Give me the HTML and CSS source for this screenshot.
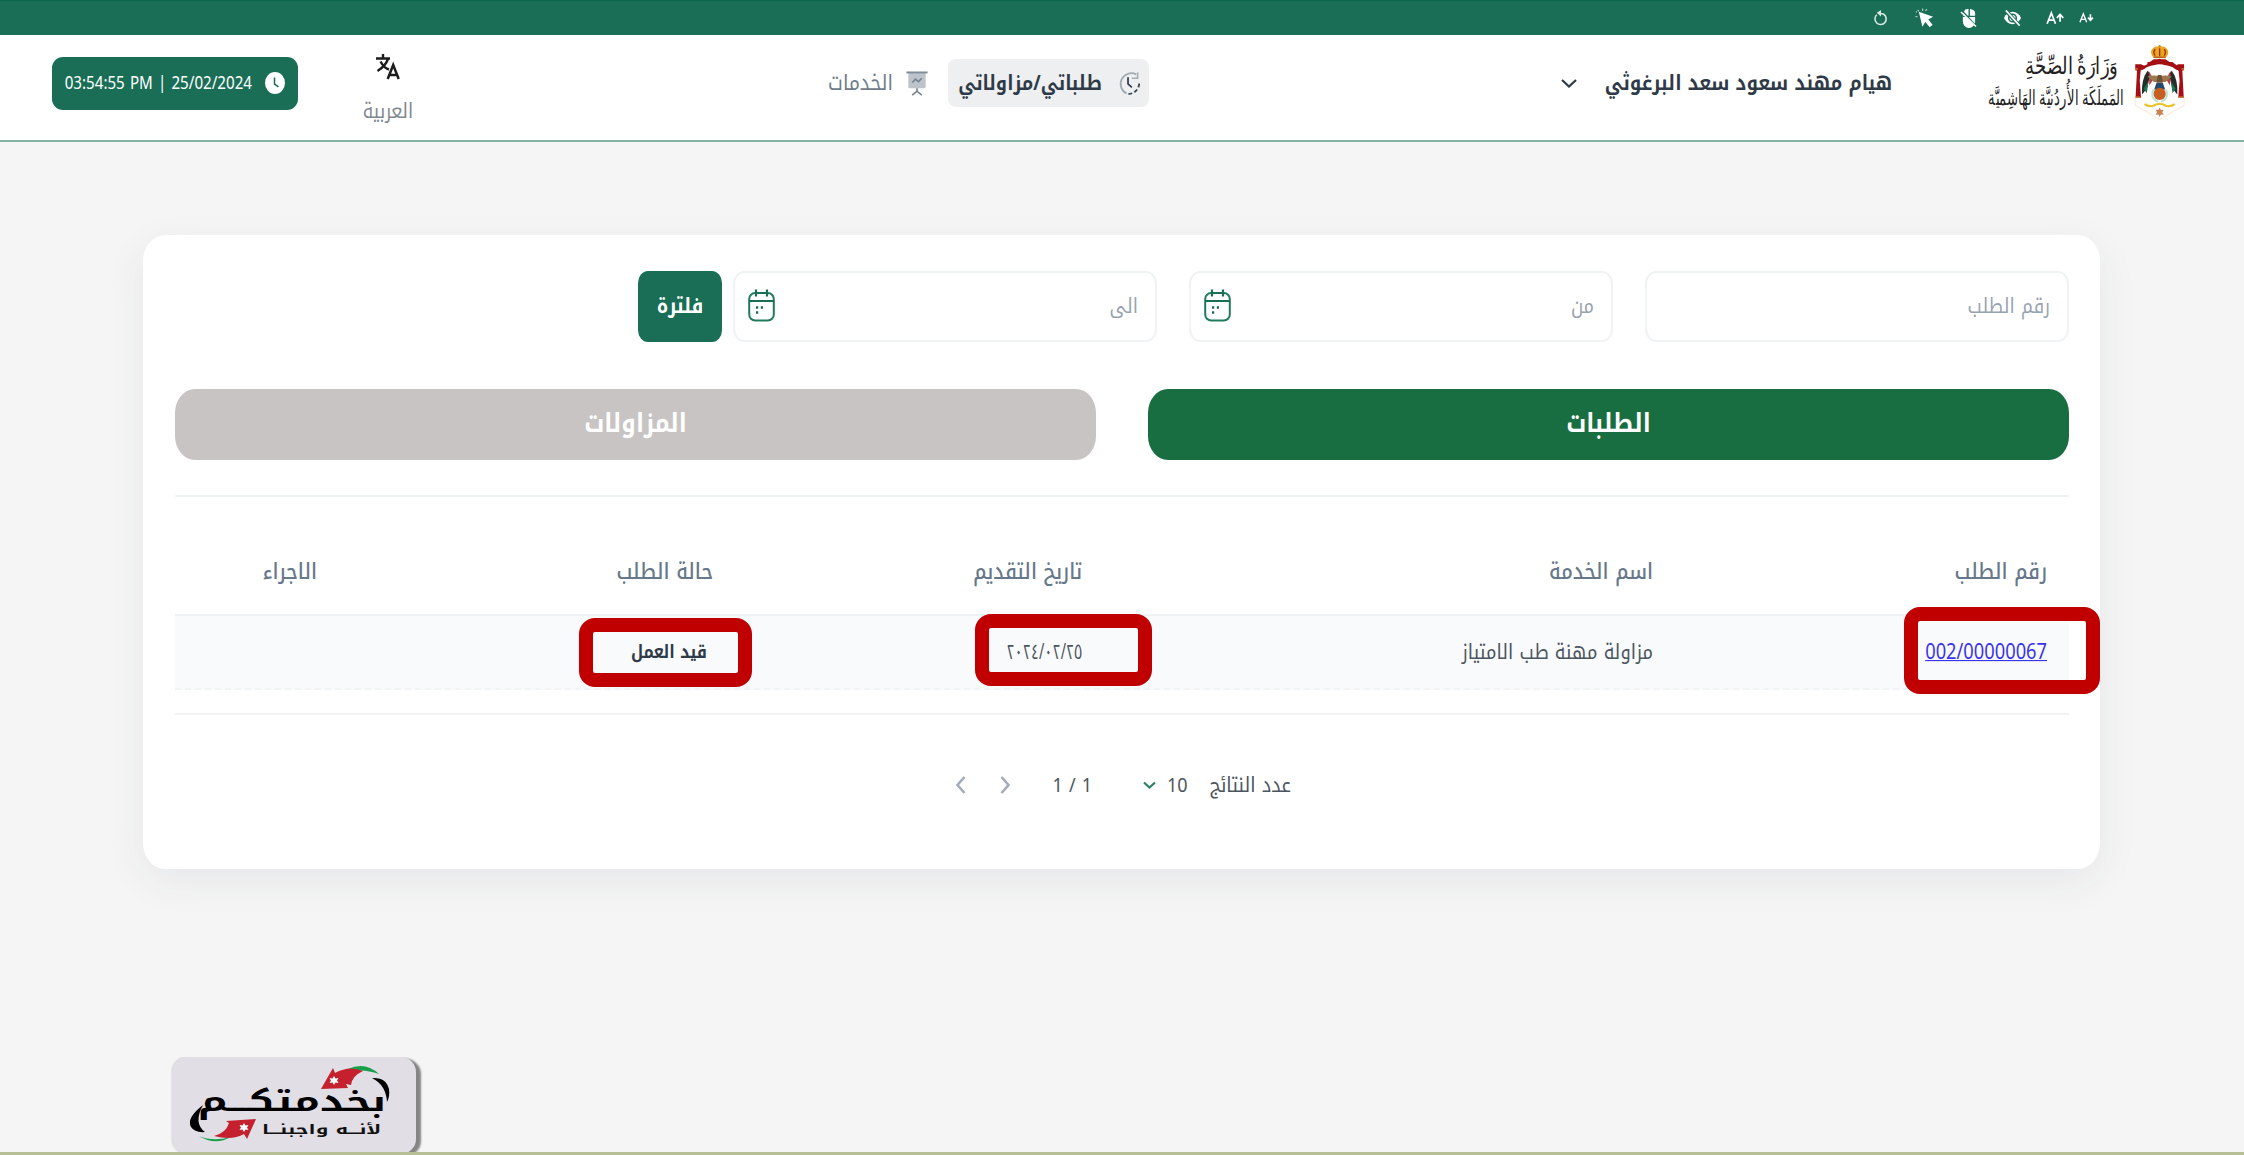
FILE: index.html
```html
<!DOCTYPE html>
<html lang="ar" dir="rtl">
<head>
<meta charset="utf-8">
<title>طلباتي/مزاولاتي</title>
<link rel="stylesheet" href="styles.css">
</head>
<body>
<div class="topbar">
  <svg class="tool font-down" viewBox="0 0 16 18"><path d="M1 13.5 4.6 4.500 8.200 13.500M2.400 10.500h4.400" fill="none" stroke="#fff" stroke-width="1.500"/><path d="M12.200 5v6M9.600 8.600l2.600 2.800 2.600-2.800" fill="none" stroke="#fff" stroke-width="1.700"/></svg>
  <svg class="tool font-up" viewBox="0 0 20 18"><path d="M1.200 15 5.600 3.600 10 15M2.800 11.200h5.600" fill="none" stroke="#fff" stroke-width="1.800"/><path d="M14.800 13V5.500M11.400 9l3.400-3.800L18.200 9" fill="none" stroke="#fff" stroke-width="1.800"/></svg>
  <svg class="tool eye" viewBox="0 0 20 18"><path d="M1 9c2-4 5-6.500 9-6.500s7 2.500 9 6.500c-2 4-5 6.500-9 6.500S3 13 1 9z" fill="#fff"/><circle cx="10" cy="9" r="4" fill="none" stroke="#1a6e56" stroke-width="1.600"/><path d="M2 0l15 17" stroke="#1a6e56" stroke-width="4"/><path d="M3 1l14.500 16" stroke="#fff" stroke-width="1.700"/></svg>
  <svg class="tool mouse" viewBox="0 0 18 22"><path d="M5.500 1.500Q8 .5 9 1v7H3.500V5zM10.500 1Q15.500 1.500 16 5v3h-5.500zM3 9.500h13V14a6.500 7 0 0 1-13 0z" fill="#fff"/><path d="M1.500 2l15.500 17" stroke="#1a6e56" stroke-width="1.500"/><path d="M1 4l16 15.500" stroke="#fff" stroke-width="1.500"/></svg>
  <svg class="tool cursor" viewBox="0 0 20 22"><path d="M4 4l15 5.200-5 2.800 4.500 5.500-3 2.800-4.700-5.500-3 5z" fill="#fff"/><path d="M.5 9h2M2 4.500 1 3.500M8 3V.5M3 2l1 1.500M11 3l1.500-2" stroke="#a9cabd" stroke-width="1.300"/></svg>
  <svg class="tool reset" viewBox="0 0 16 18"><path d="M4 5.500A6 6 0 1 0 11.500 5Q9.500 4 7 4.200" fill="none" stroke="#d7e7e1" stroke-width="1.700"/><path d="M4 3.500 8.500.5v6.800z" fill="#d7e7e1"/></svg>
</div>

<header class="header">
  <div class="brand">
    <svg class="emblem" viewBox="65 20 165 244">
      <path d="M72 184v28q36 18 76 44 40-26 76-44v-28" fill="none" stroke="#f9e3d2" stroke-width="3"/>
      <path d="M110 82h20l18-10 18 10h20l24 18" fill="none" stroke="#a31418" stroke-width="10"/>
      <path d="M72 84h18q12 10 28-8l12-8h36l12 8q16 18 28 8h18v18q-22 4-34-8-24-10-42-10t-42 10q-12 12-34 8z" fill="#a50f14"/>
      <path d="M78 94h12l-4 40 4 54H73zM218 94h-12l4 40-4 54h17z" fill="#a50f14"/>
      <path d="M72 98h8M216 98h8M74 186h14M208 186h14" stroke="#d48a26" stroke-width="4"/>
      <path d="M128 62q-14-18 0-29 12-9 20 0 8-9 20 0 14 11 0 29z" fill="#e8a51d"/>
      <path d="M134 57q-8-12 0-20M148 59V34M162 57q8-12 0-20" fill="none" stroke="#9e2a18" stroke-width="4"/>
      <path d="M148 24v9M143 28h10" stroke="#d49119" stroke-width="4"/>
      <path d="M129 62h38" stroke="#bd651b" stroke-width="5"/>
      <path d="M110 104q-20 28-17 74l16-20 10-44z" fill="#252d2a"/><path d="M114 104l14 26-12 20z" fill="#c13840"/><path d="M98 160l10 14 5-38z" fill="#1c7751"/>
      <path d="M186 104q20 28 17 74l-16-20-10-44z" fill="#252d2a"/><path d="M182 104l-14 26 12 20z" fill="#c13840"/><path d="M198 160l-10 14-5-38z" fill="#1c7751"/>
      <path d="M110 122q20-6 38 0 18-6 38 0l-20 17h-36z" fill="#9a794f"/>
      <path d="M142 117h12l4 24h-20z" fill="#6f5235"/>
      <path d="M138 142h20l7 20h-34z" fill="#24486c"/>
      <path d="M128 162q-10 30 16 38M168 162q10 30-16 38" fill="none" stroke="#bfe0d6" stroke-width="6"/>
      <circle cx="148" cy="176" r="19" fill="#c65f22"/>
      <path d="M101 208q14 10 29 4 18-10 36 0 15 6 29-4" fill="none" stroke="#e7c32d" stroke-width="7"/>
      <path d="M148 218l4 8 9-1-5 8 5 8-9-1-4 8-4-8-9 1 5-8-5-8 9 1z" fill="#c98252"/>
    </svg>
    <svg class="brand-name" viewBox="0 0 138 70" direction="rtl">
      <text class="script" transform="translate(131 26) scale(1 1.400)" textLength="93" lengthAdjust="spacingAndGlyphs">وَزَارَةُ الصِّحَّةِ</text>
      <text class="script small" transform="translate(137 57) scale(1 1.650)" textLength="136" lengthAdjust="spacingAndGlyphs">المَملَكَة الأُردُنيَّة الهَاشِميَّة</text>
    </svg>
  </div>
  <div class="user">
    <span class="t name">هيام مهند سعود سعد البرغوثي</span>
    <svg class="chev" viewBox="0 0 16 9"><path d="M1 1l7 6.500L15 1" fill="none" stroke="#2e3a47" stroke-width="2.200"/></svg>
  </div>
  <nav class="nav">
    <a class="nav-item active">
      <svg class="nav-clock" viewBox="0 0 24 26"><path d="M20 4A11 11 0 1 0 10 24" fill="none" stroke="#a5abb2" stroke-width="1.900"/><path d="M21.500 2v6h-6" fill="none" stroke="#a5abb2" stroke-width="1.700"/><path d="M12 24.500A11.500 11.500 0 0 0 23 11" fill="none" stroke="#3b4653" stroke-width="1.900" stroke-dasharray="4 2.500"/><path d="M11.500 7v7l4 3.500" fill="none" stroke="#2e3a47" stroke-width="1.800"/></svg>
      <span class="t">طلباتي/مزاولاتي</span>
    </a>
    <a class="nav-item">
      <svg class="nav-board" viewBox="0 0 22 26"><path d="M2 2h18v14q0 2-2 2H4q-2 0-2-2z" fill="#bcc3cb"/><path d="M0 1.500h22" stroke="#7f8b98" stroke-width="2"/><path d="M6 12l3.500-3.500 3 2.500L16 7.500M11 18v3M6 25l5-4 5 4" fill="none" stroke="#75818e" stroke-width="1.700"/></svg>
      <span class="t">الخدمات</span>
    </a>
  </nav>
  <div class="lang">
    <svg viewBox="0 0 24 27"><path d="M0 5.500h14M7 1v4.500M12 6Q9.500 13 1.500 18M4.500 8.500Q8 15 13 16.500" fill="none" stroke="#1c1c1c" stroke-width="2.400"/><path d="M11.700 26l5.500-14 5.500 14M13.500 22h7.500" fill="none" stroke="#1c1c1c" stroke-width="2.500"/></svg>
    <span class="t">العربية</span>
  </div>
  <div class="clock">
    <svg viewBox="0 0 20 22"><ellipse cx="10" cy="11" rx="10" ry="11" fill="#fff"/><path d="M9.500 5.500v6.500l4 2.800" fill="none" stroke="#1a6e56" stroke-width="1.500"/></svg>
    <span class="t" dir="ltr">03:54:55 PM | 25/02/2024</span>
  </div>
</header>

<main class="card">
  <form class="filters">
    <div class="field"><span class="t">رقم الطلب</span></div>
    <div class="field"><span class="t">من</span>
      <svg class="cal" viewBox="0 0 27 33"><rect x="1.200" y="4" width="24.600" height="27.500" rx="6" fill="none" stroke="#1f7a5e" stroke-width="2"/><path d="M1 12h25M7.500 4h12M8 .5v7M19 .5v7" stroke="#1a6e56" stroke-width="2.200"/><path d="M8 18.500h2.200M12.800 18.500H15M8 23.500h2.200" stroke="#1a6e56" stroke-width="2.600"/></svg>
    </div>
    <div class="field"><span class="t">الى</span>
      <svg class="cal" viewBox="0 0 27 33"><rect x="1.200" y="4" width="24.600" height="27.500" rx="6" fill="none" stroke="#1f7a5e" stroke-width="2"/><path d="M1 12h25M7.500 4h12M8 .5v7M19 .5v7" stroke="#1a6e56" stroke-width="2.200"/><path d="M8 18.500h2.200M12.800 18.500H15M8 23.500h2.200" stroke="#1a6e56" stroke-width="2.600"/></svg>
    </div>
    <div class="filter-btn"><span class="t">فلترة</span></div>
  </form>

  <div class="tabs">
    <div class="tab on"><span class="t">الطلبات</span></div>
    <div class="tab"><span class="t">المزاولات</span></div>
  </div>

  <section class="table">
    <div class="row head">
      <div><span class="t">رقم الطلب</span></div>
      <div><span class="t">اسم الخدمة</span></div>
      <div><span class="t">تاريخ التقديم</span></div>
      <div><span class="t">حالة الطلب</span></div>
      <div><span class="t">الاجراء</span></div>
    </div>
    <div class="row body">
      <div><a class="t link" href="#">002/00000067</a><i class="mark mark-number"></i></div>
      <div><span class="t">مزاولة مهنة طب الامتياز</span></div>
      <div><span class="t date">٢٠٢٤/٠٢/٢٥</span><i class="mark mark-date"></i></div>
      <div><span class="t status">قيد العمل</span><i class="mark mark-status"></i></div>
      <div></div>
    </div>
  </section>

  <div class="pager">
    <span class="t label">عدد النتائج</span>
    <span class="t count">10</span>
    <svg class="pick" viewBox="0 0 13 9"><path d="M1 1.500l5.500 5L12 1.500" fill="none" stroke="#2d8264" stroke-width="2.200"/></svg>
    <span class="t pages">1 / 1</span>
    <svg class="arrow next" viewBox="0 0 10 18"><path d="M1.500 1l7 8-7 8" fill="none" stroke="#a3adb8" stroke-width="2.600"/></svg>
    <svg class="arrow" viewBox="0 0 10 18"><path d="M8.500 1l-7 8 7 8" fill="none" stroke="#a3adb8" stroke-width="2.600"/></svg>
  </div>
</main>

<footer class="footer">
  <div class="badge">
    <svg viewBox="0 0 244 97" direction="rtl">
      <path d="M176 12q17-8 31 5-14-5-25-3z" fill="#16a04c"/>
      <path d="M149 32l12-21 2 5q14-8 28-2-11 5-12 14l-5-1 2 4z" fill="#c4202e"/>
      <path d="M162 19l1.500 2.500 3-.5-1.500 2.500 1.500 2.500-3-.5-1.500 2.500-1.500-2.500-3 .5 1.500-2.500-1.500-2.500 3 .5z" fill="#fff"/>
      <path d="M200 21q14-1 17 11 1 8-2 13-1-17-15-24z" fill="#000"/>
      <path d="M31 48q-17 13-12 22 4 6 14 5-12-9-2-27z" fill="#000"/>
      <path d="M27 79q14 6 32 1-16 9-32-1z" fill="#16a04c"/>
      <path d="M84 62l-9 20-3-5q-12 7-30 2 12-3 15-13l-3-2z" fill="#c4202e"/>
      <path d="M72 66l1.500 2.500 3-.5-1.500 2.500 1.500 2.500-3-.5-1.500 2.500-1.500-2.500-3 .5 1.500-2.500-1.500-2.500 3 .5z" fill="#fff"/>
      <text class="badge-big" x="214" y="54" textLength="188" lengthAdjust="spacingAndGlyphs">بخدمتكـــم</text>
      <text class="badge-small" x="209" y="77" textLength="119" lengthAdjust="spacingAndGlyphs">لأنـــه واجبنـــا</text>
    </svg>
  </div>
</footer>
</body>
</html>
```
FILE: styles.css
```css
* { box-sizing: border-box; }
body {
  margin: 0;
  height: 1155px;
  overflow: hidden;
  display: flex;
  flex-direction: column;
  background: #f5f5f5;
  color: #2e3a47;
  font-family: "Noto Kufi Arabic", "Noto Sans", "DejaVu Sans", sans-serif;
  font-size: 18.300px;
  font-feature-settings: "rlig" 0, "liga" 0;
}
svg { display: block; flex: none; }

/* tall, narrow lettering */
.t {
  display: inline-block;
  white-space: nowrap;
  line-height: 30px;
  transform: scaleY(1.140);
}

.topbar {
  height: 35px;
  flex: none;
  background: #1a6e56;
  border-top: 1px solid #0b654b;
  display: flex;
  align-items: center;
  padding-right: 150px;
}
.tool { height: 18px; }
.font-down { width: 15px; }
.font-up { width: 19px; margin-right: 14px; }
.eye { width: 19px; margin-right: 24px; }
.mouse { width: 17px; height: 21px; margin-right: 26px; }
.cursor { width: 19px; height: 21px; margin-right: 26px; }
.reset { width: 15px; margin-right: 27px; }

.header {
  height: 107px;
  flex: none;
  background: #fff;
  border-bottom: 2px solid #84b3a3;
  display: flex;
  align-items: center;
  padding: 0 58px 9px 52px;
}
.brand { display: flex; align-items: center; gap: 8px; width: 196px; }
.emblem { width: 53px; height: 80px; }
.brand-name { width: 138px; height: 70px; }
.script { font: 17px serif; fill: #222; }
.script.small { font-size: 13px; }
.user { display: flex; align-items: center; width: 331px; margin-right: 98px; font-weight: 700; justify-content: space-between; }
.name { font-size: 18.360px; }
.user .t, .nav .t { margin-top: -1px; }
.chev { width: 16px; height: 9px; }
.nav { display: flex; align-items: center; margin-right: 412px; gap: 20px; width: 330px; }
.nav-item { display: flex; align-items: center; gap: 13px; height: 48px; color: #707c89; font-size: 19px; }
.nav-item.active { background: #edeff1; color: #2e3a47; border-radius: 8px; padding: 0 9px 0 8px; font-weight: 700; font-size: 18px; gap: 15px; width: 201px; }
.nav-clock { width: 23px; height: 26px; }
.nav-board { width: 22px; height: 25px; }
.lang { margin-right: auto; width: 52px; display: flex; flex-direction: column; align-items: center; gap: 16px; color: #7f8891; font-size: 18px; padding-top: 12px; }
.lang svg { width: 24px; height: 27px; }
.clock { margin-right: 64px; width: 246px; height: 53px; background: #1a6e56; border-radius: 11px; color: #fff; display: flex; align-items: center; padding-right: 13px; gap: 13px; font-size: 15.150px; }
.clock svg { width: 20px; height: 22px; }

.card {
  width: 1957px;
  height: 634px;
  flex: none;
  margin: 93px 144px 0 0;
  padding: 36px 31px 0 32px;
  background: #fff;
  border-radius: 22px / 26px;
  box-shadow: 0 12px 40px rgba(40, 60, 80, .070);
}
.filters { display: flex; height: 71px; }
.field {
  width: 424px;
  border: 2px solid #f0f3f4;
  border-radius: 11px / 13px;
  margin-left: 32px;
  padding: 0 17px 2px 13px;
  display: flex;
  align-items: center;
  justify-content: space-between;
  color: #97a3b0;
  font-size: 18.200px;
}
.field:nth-child(3) { margin-left: 11px; }
.cal { width: 27px; height: 33px; }
.filter-btn { width: 84px; padding-bottom: 2px; background: #1a6e56; color: #fff; border-radius: 10px / 12px; font-weight: 700; display: flex; align-items: center; justify-content: center; }
.tabs { display: flex; gap: 52px; margin-top: 47px; height: 71px; }
.tab { flex: 1; padding-bottom: 3px; background: #c8c4c3; border-radius: 20px / 24px; color: #fff; font-size: 23.200px; font-weight: 700; display: flex; align-items: center; justify-content: center; }
.tab.on { background: #196e41; }

.table { margin-top: 35px; border-top: 2px solid #eff2f3; border-bottom: 2px solid #f2f2f3; padding-bottom: 23px; }
.row { display: grid; grid-template-columns: 394px 571px 369px 396px 1fr; }
.row > div { padding-right: 22px; position: relative; display: flex; align-items: center; }
.head { height: 119px; padding-top: 33px; color: #66788a; font-size: 19.600px; font-weight: 500; border-bottom: 2px solid #eff1f3; }
.body { height: 74px; background: #f9fafc; border-bottom: 2px dashed #f3f4f6; color: #4b5560; font-size: 18.300px; }
.link { color: #3a33ee; text-decoration: underline; direction: ltr; }
.date { transform: scale(.780, 1.140); transform-origin: right center; }
.status { margin-right: 6px; font-size: 15.800px; font-weight: 700; color: #2e3a47; }

/* highlight frames drawn over the cells */
.mark { position: absolute; border: 14px solid #c00000; border-radius: 16px; }
.mark-number { right: -31px; top: -9px; width: 196px; height: 87px; }
.mark-date { right: -48px; top: -2px; width: 177px; height: 72px; }
.mark-status { right: -17px; top: 2px; width: 173px; height: 69px; }

.pager { display: flex; align-items: center; margin-top: 55px; padding-right: 778px; height: 30px; color: #4b5560; }
.count { margin-right: 22px; font-size: 18px; }
.pick { width: 13px; height: 9px; margin-right: 11px; }
.pages { margin-right: 51px; font-size: 18px; direction: ltr; }
.next { margin-right: 43px; }
.arrow { width: 10px; height: 18px; }
.arrow + .arrow { margin-right: 34px; }

.footer { margin-top: auto; height: 98px; border-bottom: 3px solid #b6bf96; direction: ltr; overflow: hidden; padding-left: 172px; }
.badge { width: 244px; height: 97px; background: #e1dee6; border-radius: 15px; box-shadow: 5px 2px 2px #858585, 0 0 2px #bbb; }
.badge svg { width: 244px; height: 97px; }
.badge-big { font: 700 28px "Noto Kufi Arabic", sans-serif; fill: #000; }
.badge-small { font: 700 13px "Noto Kufi Arabic", sans-serif; fill: #111; }
```
